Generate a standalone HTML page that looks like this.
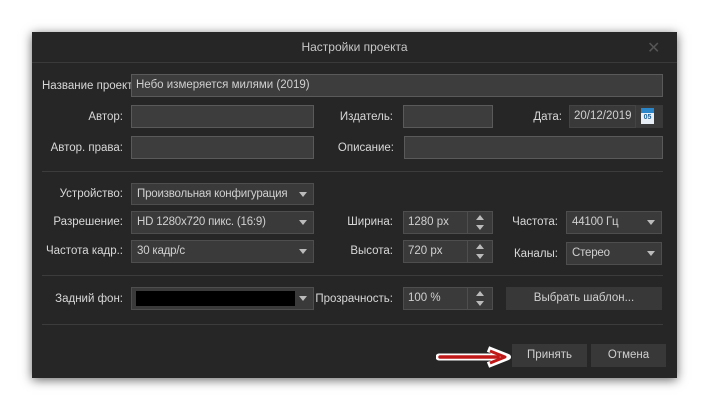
<!DOCTYPE html>
<html><head><meta charset="utf-8"><style>
*{margin:0;padding:0;box-sizing:border-box}
body{width:709px;height:410px;background:#fff;position:relative;overflow:hidden;font-family:"Liberation Sans","DejaVu Sans",sans-serif;font-size:11.5px;color:#d8d8d8}
.dlg{position:absolute;left:32px;top:32px;width:645px;height:346px;background:#262626;box-shadow:0 2px 10px rgba(0,0,0,.6)}
.a{position:absolute}
.lbl{position:absolute;text-align:right;line-height:14px;white-space:nowrap}
.in{position:absolute;background:#3d3d3d;border:1px solid #5a5a5a;color:#d0d0d0;padding-left:4px;line-height:21px;white-space:nowrap}
.cb{position:absolute;background:#3a3a3a;border:1px solid #4e4e4e;color:#d0d0d0;padding-left:5px;line-height:20px;white-space:nowrap;letter-spacing:-0.2px}
.cb:after{content:"";position:absolute;right:6px;top:8px;border-left:4px solid transparent;border-right:4px solid transparent;border-top:5px solid #bbb}
.sp{position:absolute;width:26px;background:#3a3a3a;border:1px solid #4e4e4e}
.sp:before{content:"";position:absolute;left:8px;top:3px;border-left:4px solid transparent;border-right:4px solid transparent;border-bottom:5px solid #bbb}
.sp:after{content:"";position:absolute;left:8px;bottom:3px;border-left:4px solid transparent;border-right:4px solid transparent;border-top:5px solid #bbb}
.sep{position:absolute;left:42px;width:621px;height:1px;background:#3c3c3c}
.btn{position:absolute;background:#383838;color:#d0d0d0;text-align:center;line-height:23px}
</style></head><body>
<div class="dlg"></div>
<div class="a" style="left:32px;top:62px;width:645px;height:1px;background:#3a3a3a"></div>
<div class="a" style="left:32px;top:40px;width:645px;text-align:center;color:#c8c8c8;font-size:12px">Настройки проекта</div>
<div class="a" style="left:647px;top:38px;color:#555;font-size:16px">✕</div>

<div class="lbl" style="left:42px;top:79px">Название проекта</div>
<div class="in" style="left:131px;top:74px;width:532px;height:23px;line-height:21px">Небо измеряется милями (2019)</div>

<div class="lbl" style="left:60px;top:110px;width:63px">Автор:</div>
<div class="in" style="left:131px;top:105px;width:183px;height:23px"></div>
<div class="lbl" style="left:320px;top:110px;width:73px">Издатель:</div>
<div class="in" style="left:403px;top:105px;width:90px;height:23px"></div>
<div class="lbl" style="left:500px;top:110px;width:62px">Дата:</div>
<div class="in" style="left:569px;top:105px;width:67px;height:23px;background:#393939;border-color:#444">20/12/2019</div>
<div class="a" style="left:636px;top:105px;width:27px;height:23px;background:#393939"></div>
<div class="a" style="left:641px;top:108px;width:13px;height:16px;background:#e8eef5;border-top:5px solid #2a86c8"></div>
<div class="a" style="left:641px;top:114px;width:13px;font-size:7px;font-weight:bold;color:#1b5f9a;text-align:center">05</div>

<div class="lbl" style="left:40px;top:141px;width:83px">Автор. права:</div>
<div class="in" style="left:131px;top:136px;width:183px;height:23px"></div>
<div class="lbl" style="left:320px;top:141px;width:74px">Описание:</div>
<div class="in" style="left:404px;top:136px;width:259px;height:23px"></div>

<div class="sep" style="top:171px"></div>

<div class="lbl" style="left:40px;top:187px;width:83px">Устройство:</div>
<div class="cb" style="left:131px;top:183px;width:183px;height:22px">Произвольная конфигурация</div>

<div class="lbl" style="left:40px;top:215px;width:83px">Разрешение:</div>
<div class="cb" style="left:131px;top:211px;width:183px;height:23px">HD 1280x720 пикс. (16:9)</div>
<div class="lbl" style="left:320px;top:215px;width:73px">Ширина:</div>
<div class="in" style="left:403px;top:211px;width:65px;height:23px;background:#3a3a3a;border-color:#4e4e4e">1280 px</div>
<div class="sp" style="left:467px;top:211px;height:23px"></div>
<div class="lbl" style="left:500px;top:215px;width:58px">Частота:</div>
<div class="cb" style="left:566px;top:211px;width:96px;height:23px">44100 Гц</div>

<div class="lbl" style="left:40px;top:244px;width:83px">Частота кадр.:</div>
<div class="cb" style="left:131px;top:240px;width:183px;height:23px">30 кадр/с</div>
<div class="lbl" style="left:320px;top:244px;width:73px">Высота:</div>
<div class="in" style="left:403px;top:240px;width:65px;height:23px;background:#3a3a3a;border-color:#4e4e4e">720 px</div>
<div class="sp" style="left:467px;top:240px;height:23px"></div>
<div class="lbl" style="left:500px;top:247px;width:58px">Каналы:</div>
<div class="cb" style="left:566px;top:242px;width:96px;height:23px">Стерео</div>

<div class="sep" style="top:275px"></div>

<div class="lbl" style="left:40px;top:292px;width:83px">Задний фон:</div>
<div class="cb" style="left:131px;top:287px;width:183px;height:23px;padding:0"><div style="position:absolute;left:4px;top:3px;width:159px;height:15px;background:#000"></div></div>
<div class="lbl" style="left:310px;top:292px;width:83px">Прозрачность:</div>
<div class="in" style="left:403px;top:287px;width:65px;height:23px;background:#3a3a3a;border-color:#4e4e4e">100 %</div>
<div class="sp" style="left:467px;top:287px;height:23px"></div>
<div class="btn" style="left:506px;top:287px;width:156px;height:23px">Выбрать шаблон...</div>

<div class="sep" style="top:324px"></div>

<div class="btn" style="left:512px;top:344px;width:75px;height:23px">Принять</div>
<div class="btn" style="left:591px;top:344px;width:75px;height:23px">Отмена</div>

<svg class="a" style="left:436px;top:346px" width="76" height="22" viewBox="0 0 76 22">
<path d="M3 11 H60" stroke="#fff" stroke-width="7" stroke-linecap="round"/>
<path d="M52 3 L72 11 L52 19" fill="none" stroke="#fff" stroke-width="6" stroke-linejoin="round"/>
<path d="M4 11 H62" stroke="#c01818" stroke-width="3.5" stroke-linecap="round"/>
<path d="M54 5 L69 11 L54 17" fill="none" stroke="#c01818" stroke-width="3" stroke-linejoin="round"/>
</svg>
</body></html>
